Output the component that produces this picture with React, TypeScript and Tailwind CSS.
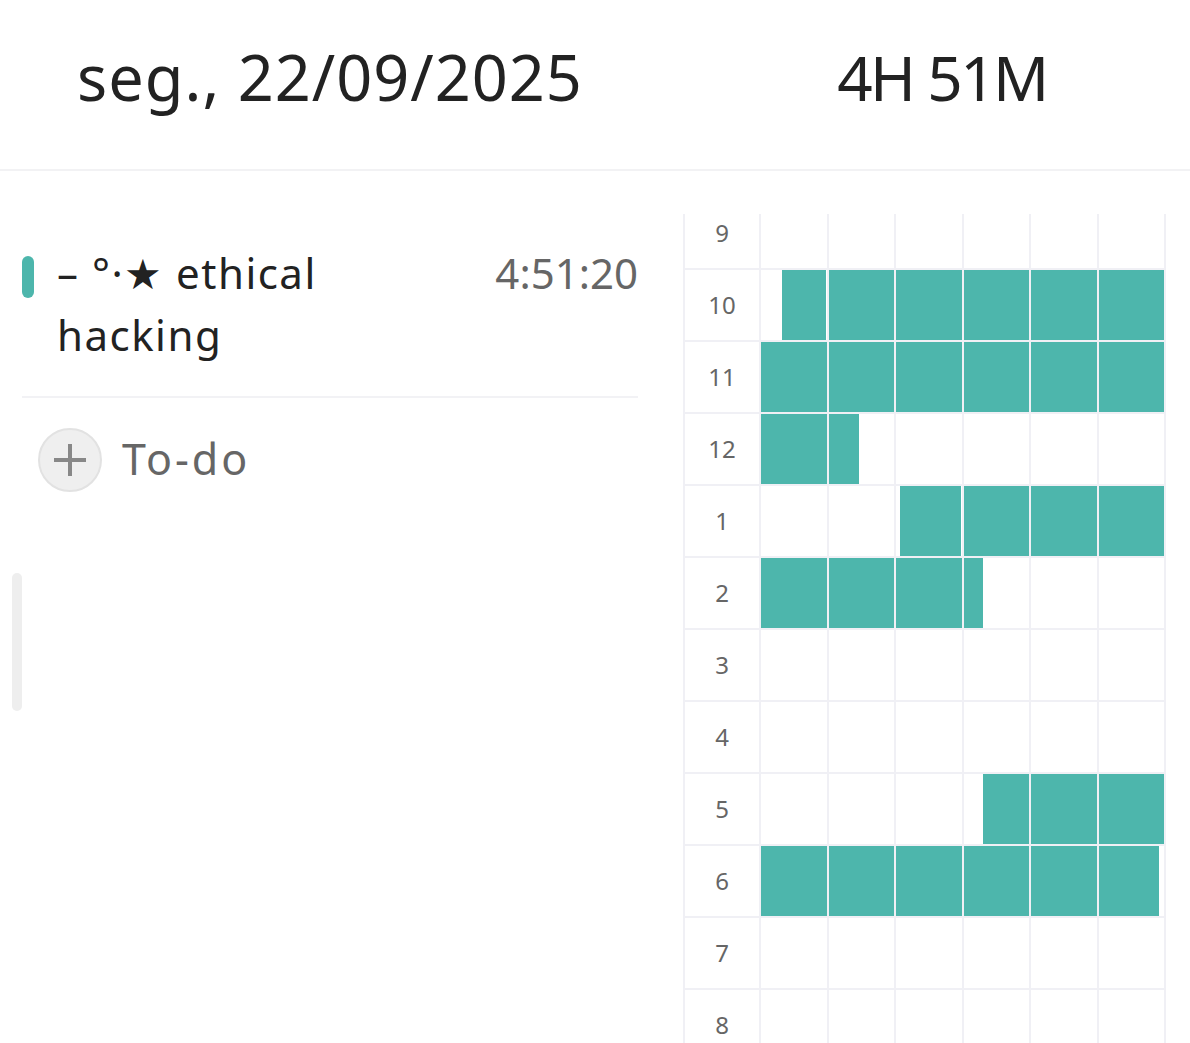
import React from 'react';

type Fill = { col: number; from: number; to: number };

// each column = 10 minutes, fill values are fraction of the cell
const hours: { label: string; fills: Fill[] }[] = [
  { label: '9', fills: [] },
  { label: '10', fills: [{ col: 0, from: 0.32, to: 1 }, { col: 1, from: 0, to: 1 }, { col: 2, from: 0, to: 1 }, { col: 3, from: 0, to: 1 }, { col: 4, from: 0, to: 1 }, { col: 5, from: 0, to: 1 }] },
  { label: '11', fills: [0, 1, 2, 3, 4, 5].map((c) => ({ col: c, from: 0, to: 1 })) },
  { label: '12', fills: [{ col: 0, from: 0, to: 1 }, { col: 1, from: 0, to: 0.46 }] },
  { label: '1', fills: [{ col: 2, from: 0.06, to: 1 }, { col: 3, from: 0, to: 1 }, { col: 4, from: 0, to: 1 }, { col: 5, from: 0, to: 1 }] },
  { label: '2', fills: [{ col: 0, from: 0, to: 1 }, { col: 1, from: 0, to: 1 }, { col: 2, from: 0, to: 1 }, { col: 3, from: 0, to: 0.3 }] },
  { label: '3', fills: [] },
  { label: '4', fills: [] },
  { label: '5', fills: [{ col: 3, from: 0.3, to: 1 }, { col: 4, from: 0, to: 1 }, { col: 5, from: 0, to: 1 }] },
  { label: '6', fills: [0, 1, 2, 3, 4].map((c) => ({ col: c, from: 0, to: 1 })).concat([{ col: 5, from: 0, to: 0.92 }]) },
  { label: '7', fills: [] },
  { label: '8', fills: [] },
];

const font = { fontFamily: '"Noto Sans", "Open Sans", sans-serif' };

const HourRow: React.FC<{ label: string; fills: Fill[] }> = ({ label, fills }) => (
  <>
    <div className="bg-white h-[70px] flex items-center justify-center text-[24px] text-[#666]">{label}</div>
    {[0, 1, 2, 3, 4, 5].map((c) => {
      const f = fills.find((x) => x.col === c);
      return (
        <div key={c} className="bg-white h-[70px] relative">
          {f && (
            <div
              className="absolute top-0 bottom-0 bg-[#4db6ac]"
              style={{ left: `${f.from * 100}%`, width: `${(f.to - f.from) * 100}%` }}
            />
          )}
        </div>
      );
    })}
  </>
);

const App: React.FC = () => {
  return (
    <div className="w-[1190px] h-[1043px] overflow-hidden bg-white text-[#222]" style={font}>
      {/* Header */}
      <div className="h-[171px] flex items-center border-b-2 border-[#f2f2f4]">
        <div className="w-[660px] text-center text-[63px] tracking-[1px] pb-[14px]">seg., 22/09/2025</div>
        <div className="flex-1 text-center text-[62px] tracking-[-2.5px] pb-[14px] pl-[34px]">4H 51M</div>
      </div>

      <div className="flex">
        {/* Left list */}
        <div className="w-[660px] flex">
          <div className="w-[22px] pt-[402px] pl-[12px]">
            <div className="w-[10px] h-[138px] rounded-full bg-[#eeeeee]" />
          </div>
          <div className="w-[616px] pt-[71px]">
            <div className="flex items-start justify-between pb-[30px] border-b-2 border-[#f2f2f5]">
              <div className="flex items-start">
                <div className="w-[12px] h-[42px] rounded-full bg-[#4db6ac] mt-[14px] mr-[23px] shrink-0" />
                <div className="w-[380px] text-[42px] tracking-[1.5px] leading-[62px] text-[#222]">– °·★ ethical hacking</div>
              </div>
              <div className="text-[42px] leading-[62px] text-[#666] shrink-0">4:51:20</div>
            </div>
            <div className="flex items-center pt-[29px] pl-[16px]">
              <div className="w-[64px] h-[64px] rounded-full bg-[#efefef] border-2 border-[#e2e2e2] flex items-center justify-center">
                <svg width="36" height="36" viewBox="0 0 36 36">
                  <path d="M18 2v32M2 18h32" stroke="#888" strokeWidth="4" />
                </svg>
              </div>
              <div className="ml-[20px] text-[43px] tracking-[3px] text-[#666] pb-[2px]">To-do</div>
            </div>
          </div>
        </div>

        {/* Timeline grid */}
        <div className="ml-[23px] mt-[43px] w-[483px] h-[900px] overflow-hidden">
          <div className="-mt-[16px] grid grid-cols-[74px_repeat(6,1fr)] gap-[2px] px-[2px] bg-[#f0f0f5]">
            {hours.map((h) => (
              <HourRow key={h.label} label={h.label} fills={h.fills} />
            ))}
          </div>
        </div>
      </div>
    </div>
  );
};

export default App;
